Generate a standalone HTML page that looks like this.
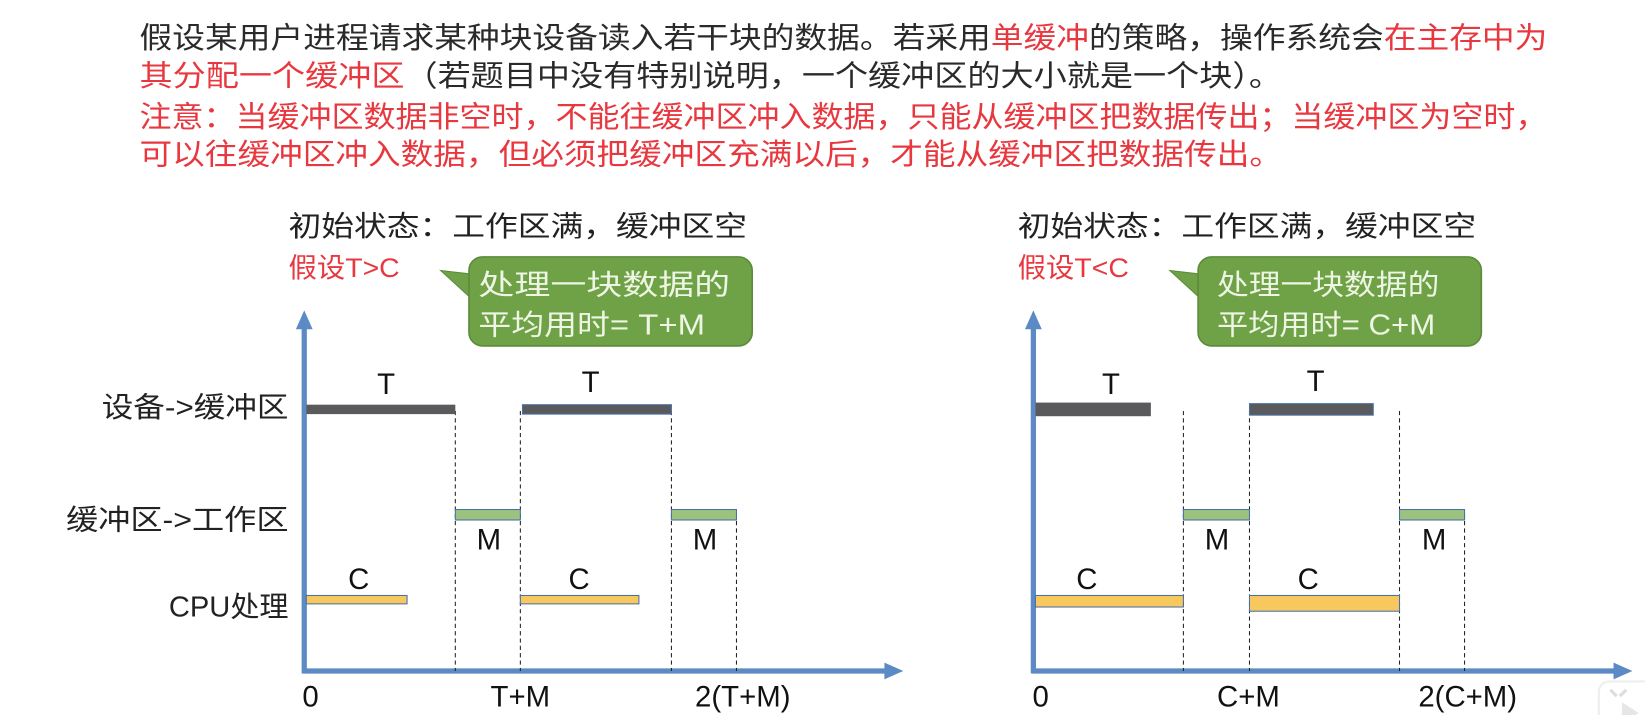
<!DOCTYPE html>
<html><head><meta charset="utf-8"><style>
html,body{margin:0;padding:0;background:#fff;overflow:hidden}
svg{display:block}
text{font-family:"Liberation Sans","Noto Sans CJK SC",sans-serif}
</style></head><body>
<svg width="1645" height="715" viewBox="0 0 1568 682" preserveAspectRatio="none" xmlns="http://www.w3.org/2000/svg">
<rect width="1568" height="682" fill="#fff"/>
<g font-size="28" fill="#2a2a2a">
<text x="133" y="46" textLength="1342" lengthAdjust="spacingAndGlyphs">假设某用户进程请求某种块设备读入若干块的数据。若采用<tspan fill="#e8383f">单缓冲</tspan>的策略，操作系统会<tspan fill="#e8383f">在主存中为</tspan></text>
<text x="133" y="82" textLength="1089" lengthAdjust="spacingAndGlyphs"><tspan fill="#e8383f">其分配一个缓冲区</tspan>（若题目中没有特别说明，一个缓冲区的大小就是一个块）。</text>
<text x="133" y="121" fill="#e8383f" textLength="1342" lengthAdjust="spacingAndGlyphs">注意：当缓冲区数据非空时，不能往缓冲区冲入数据，只能从缓冲区把数据传出；当缓冲区为空时，</text>
<text x="133" y="157" fill="#e8383f" textLength="1089" lengthAdjust="spacingAndGlyphs">可以往缓冲区冲入数据，但必须把缓冲区充满以后，才能从缓冲区把数据传出。</text>
</g>

<defs>
<g id="chart">
<text x="0" y="225" font-size="27" fill="#222" textLength="437" lengthAdjust="spacingAndGlyphs">初始状态：工作区满，缓冲区空</text>
<path d="M145 258 L180 262 L180 290 Z" fill="#6fa246" stroke="#5b8a3a"/>
<rect x="172" y="245" width="270" height="85" rx="13" fill="#6fa246" stroke="#5b8a3a" stroke-width="1.5"/>
<rect x="176" y="262" width="10" height="26" fill="#6fa246"/>
<g stroke="#5b8ac5" stroke-width="5" fill="none">
<line x1="15" y1="642" x2="15" y2="312"/>
<line x1="13" y1="640" x2="570" y2="640"/>
</g>
<path d="M15 296 L7 314 L23 314 Z" fill="#5b8ac5"/>
<path d="M586 640 L568 632 L568 648 Z" fill="#5b8ac5"/>
</g>
</defs>

<g transform="translate(275,0)"><use href="#chart"/></g>
<text x="275" y="264" font-size="26" fill="#e8383f" textLength="106" lengthAdjust="spacingAndGlyphs">假设T&gt;C</text>
<text x="456" y="281" font-size="27" fill="#eef5e4" textLength="240" lengthAdjust="spacingAndGlyphs">处理一块数据的</text>
<text x="456" y="319" font-size="27" fill="#eef5e4" textLength="216" lengthAdjust="spacingAndGlyphs">平均用时= T+M</text>
<g font-size="27" fill="#222" text-anchor="end">
<text x="275" y="398" textLength="178" lengthAdjust="spacingAndGlyphs">设备-&gt;缓冲区</text>
<text x="275" y="505" textLength="212" lengthAdjust="spacingAndGlyphs">缓冲区-&gt;工作区</text>
<text x="275" y="588" textLength="114" lengthAdjust="spacingAndGlyphs">CPU处理</text>
</g>
<g stroke="#222" stroke-width="1" stroke-dasharray="4,3">
<line x1="434" y1="392" x2="434" y2="640"/><line x1="496" y1="392" x2="496" y2="640"/>
<line x1="640" y1="392" x2="640" y2="640"/><line x1="702" y1="490" x2="702" y2="640"/>
</g>
<rect x="292" y="386" width="142" height="9" fill="#5a5a5c"/>
<rect x="498" y="386" width="142" height="9" fill="#5a5a5c" stroke="#4a70a8" stroke-width="1"/>
<rect x="434" y="486" width="62" height="10" fill="#9bc27e" stroke="#4a70a8" stroke-width="1"/>
<rect x="640" y="486" width="62" height="10" fill="#9bc27e" stroke="#4a70a8" stroke-width="1"/>
<rect x="292" y="568" width="96" height="8" fill="#f7c85e" stroke="#4a70a8" stroke-width="1"/>
<rect x="496" y="568" width="113" height="8" fill="#f7c85e" stroke="#4a70a8" stroke-width="1"/>
<g font-size="28" fill="#111" text-anchor="middle">
<text x="368" y="376">T</text><text x="563" y="374">T</text>
<text x="466" y="524">M</text><text x="672" y="524">M</text>
<text x="342" y="562">C</text><text x="552" y="562">C</text>
<text x="296" y="674">0</text><text x="496" y="674">T+M</text><text x="708" y="674">2(T+M)</text>
</g>

<g transform="translate(970,0)"><use href="#chart"/></g>
<text x="970" y="264" font-size="26" fill="#e8383f" textLength="106" lengthAdjust="spacingAndGlyphs">假设T&lt;C</text>
<text x="1160" y="281" font-size="27" fill="#eef5e4" textLength="212" lengthAdjust="spacingAndGlyphs">处理一块数据的</text>
<text x="1160" y="319" font-size="27" fill="#eef5e4" textLength="208" lengthAdjust="spacingAndGlyphs">平均用时= C+M</text>
<g stroke="#222" stroke-width="1" stroke-dasharray="4,3">
<line x1="1128" y1="392" x2="1128" y2="640"/><line x1="1191" y1="392" x2="1191" y2="640"/>
<line x1="1334" y1="392" x2="1334" y2="640"/><line x1="1396" y1="490" x2="1396" y2="640"/>
</g>
<rect x="987" y="384" width="110" height="13" fill="#5a5a5c"/>
<rect x="1191" y="385" width="118" height="11" fill="#5a5a5c" stroke="#4a70a8" stroke-width="1"/>
<rect x="1128" y="486" width="63" height="10" fill="#9bc27e" stroke="#4a70a8" stroke-width="1"/>
<rect x="1334" y="486" width="62" height="10" fill="#9bc27e" stroke="#4a70a8" stroke-width="1"/>
<rect x="987" y="568" width="141" height="11" fill="#f7c85e" stroke="#4a70a8" stroke-width="1"/>
<rect x="1191" y="568" width="143" height="15" fill="#f7c85e" stroke="#4a70a8" stroke-width="1"/>
<g font-size="28" fill="#111" text-anchor="middle">
<text x="1059" y="376">T</text><text x="1254" y="373">T</text>
<text x="1160" y="524">M</text><text x="1367" y="524">M</text>
<text x="1036" y="562">C</text><text x="1247" y="562">C</text>
<text x="992" y="674">0</text><text x="1190" y="674">C+M</text><text x="1399" y="674">2(C+M)</text>
</g>
<rect x="1524" y="650" width="60" height="50" rx="10" fill="#fff" stroke="#eee" stroke-width="2"/>
<path d="M1535 658 L1541 664 M1550 658 L1544 664" stroke="#ddd" stroke-width="3"/>
<path d="M1546 670 L1562 680 L1546 690 Z" fill="#e6e6e6"/>
</svg>
</body></html>
